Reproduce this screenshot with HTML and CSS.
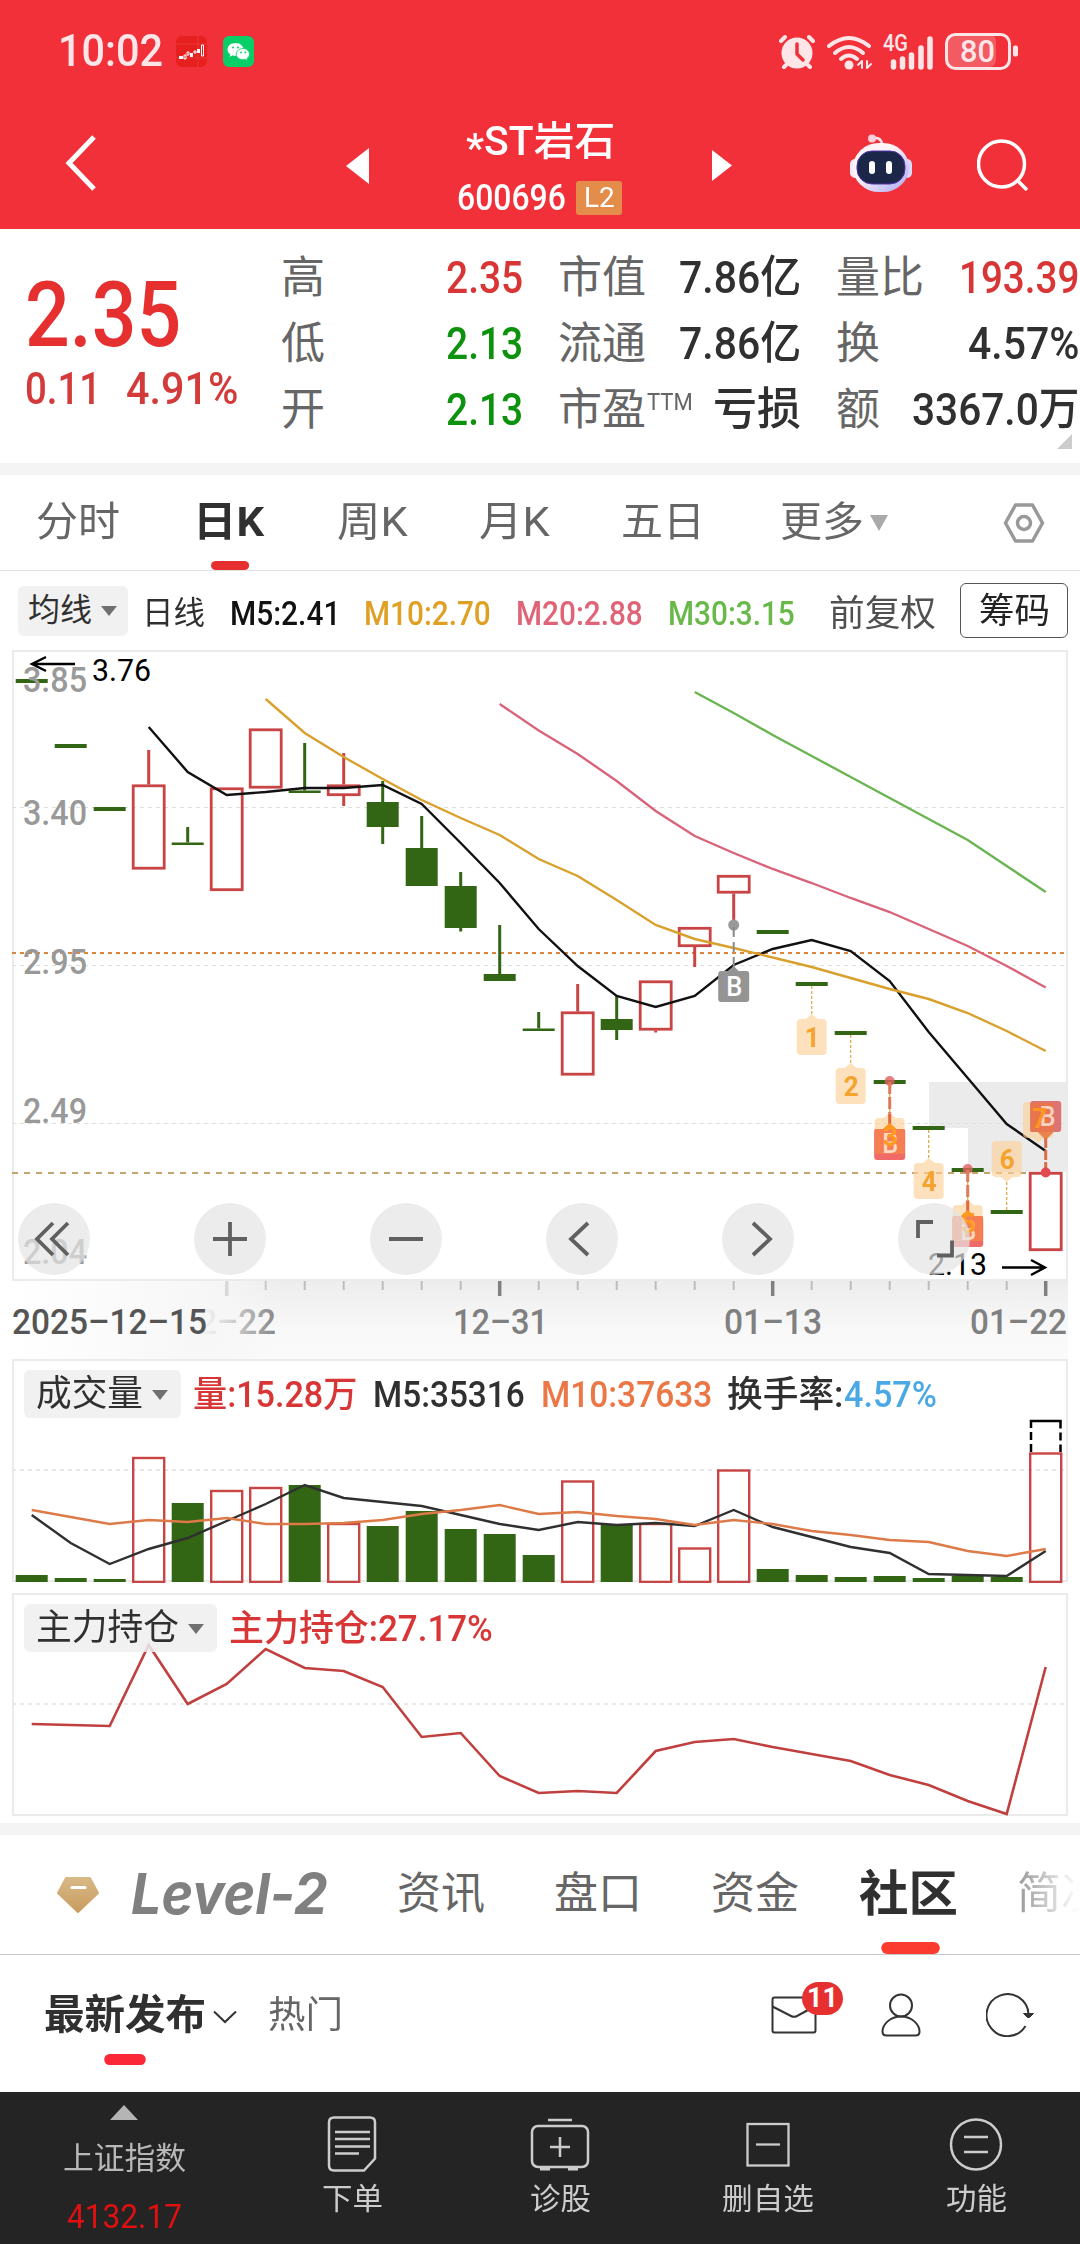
FILE: index.html
```
<!DOCTYPE html>
<html lang="zh-CN">

<head>
    <meta charset="UTF-8">
    <meta name="viewport" content="width=device-width, initial-scale=1.0">
    <title>*ST岩石 600696</title>
    <link rel="stylesheet" href="styles.css">
</head>

<body>
    <header class="header">
        <div class="status-bar">
            <span class="time" data-w="105">10:02</span>
            <svg class="app-icon" viewBox="0 0 31 31">
                <rect width="31" height="31" rx="6" fill="#e6201f" />
                <path d="M0 8h31M0 22h31M22 0v31" stroke="#f04a45" stroke-width="1" opacity=".5" />
                <path d="M3 20h4v3h-4zM14 17h3v4h-3zM21 13h3v4h-3z" fill="#fff" />
                <path d="M8 19h2v4h-2zM11 16h2v3h-2zM18 15h2v2h-2zM25.500 9h2v11h-2z" fill="none" stroke="#fff" />
            </svg>
            <svg class="app-icon wechat" viewBox="0 0 31 31">
                <rect width="31" height="31" rx="6" fill="#07ce66" />
                <path d="M12.500 7c-4.500 0-8 2.800-8 6.500 0 2 1 3.600 2.800 4.900l-.6 2.300 2.700-1.300c1 .3 2 .4 3.100.4 4.500 0 8-2.700 8-6.300S17 7 12.500 7z" fill="#fff" />
                <path d="M20 12.500c-3.800 0-6.700 2.400-6.700 5.600s2.900 5.600 6.700 5.600c.8 0 1.600-.1 2.300-.3l2.100 1.200-.5-2c1.600-1 2.600-2.700 2.600-4.500 0-3.200-2.900-5.600-6.500-5.600z" fill="#fff" stroke="#07ce66" stroke-width=".8" />
                <g fill="#07ce66"><circle cx="10" cy="11.500" r="1" /><circle cx="15" cy="11.500" r="1" /><circle cx="18" cy="16.500" r=".9" /><circle cx="22.300" cy="16.500" r=".9" /></g>
            </svg>
            <svg class="status-icons" viewBox="0 0 242 40">
                <g fill="#fee6e8" stroke="#fee6e8" stroke-linecap="round">
                    <circle cx="18" cy="22" r="15.500" stroke="none" />
                    <path d="M2 10l4-4M34 10l-4-4M7 34l-2 2M29 34l2 2" stroke-width="4" />
                    <path d="M18 13v10l6 6" fill="none" stroke="#f13039" stroke-width="3.500" stroke-linejoin="round" />
                    <path d="M50 15q20-16 40 0M56 22q14-12 28 0M62 28q8-7 16 0" fill="none" stroke-width="4" />
                    <circle cx="70" cy="34" r="4.500" stroke="none" />
                    <path d="M83 30v7M83 30l-4 4M88 30v7M88 37l4-4" fill="none" stroke-width="2" />
                    <path d="M114.500 31v5M123.500 28v8M132.500 24v12M142 17v19M151 8v28" stroke-width="5.500" />
                </g>
                <rect x="167" y="3" width="50" height="33" fill="#f25b62" rx="7" />
                <rect x="167.500" y="3.500" width="63" height="34" rx="9" fill="none" stroke="#fee6e8" stroke-width="3" />
                <rect x="234" y="14.500" width="5" height="11" rx="2" fill="#fee6e8" />
                <text x="104" y="20" font-size="23" textLength="25" lengthAdjust="spacingAndGlyphs" class="status-text">4G</text>
                <text x="181" y="31" font-size="32" textLength="35" lengthAdjust="spacingAndGlyphs" class="status-text">80</text>
            </svg>
        </div>
        <div class="title-bar">
            <svg class="back" viewBox="0 0 34 58"><path d="M30 3L5 29l25 26" fill="none" stroke="#fff" stroke-width="5" /></svg>
            <svg class="prev" viewBox="0 0 23 36"><path d="M0 18L23 0v36z" fill="#fff" /></svg>
            <div class="stock">
                <h1 class="stock-name" data-w="149"><span class="star">*</span>ST岩石</h1>
                <div class="stock-code">
                    <span data-w="109">600696</span>
                    <span class="l2"><span data-w="31">L2</span></span>
                </div>
            </div>
            <svg class="next" viewBox="0 0 20 31"><path d="M20 15.500L0 0v31z" fill="#fff" /></svg>
            <svg class="robot" viewBox="0 0 62 58">
                <defs>
                    <linearGradient id="shell" x1="0" y1="0" x2="1" y2="1">
                        <stop offset=".4" stop-color="#fff3f6" />
                        <stop offset=".85" stop-color="#bdb9f2" />
                        <stop offset="1" stop-color="#f5e8f6" />
                    </linearGradient>
                </defs>
                <path d="M23 4q8-1 9 6" fill="none" stroke="#f9dce8" stroke-width="2.500" />
                <circle cx="22" cy="4.500" r="4" fill="#f9cfdc" />
                <rect x="0" y="25" width="12" height="19" rx="5" fill="#f4eaf8" />
                <rect x="50" y="25" width="12" height="19" rx="5" fill="#dad7fa" />
                <rect x="3" y="9" width="56" height="49" rx="26" fill="url(#shell)" />
                <rect x="7" y="17" width="48" height="33" rx="15" fill="#1c2649" stroke="#5334b0" stroke-width="1" />
                <rect x="19" y="27" width="6" height="13" rx="3" fill="#fff" />
                <rect x="36" y="27" width="6" height="13" rx="3" fill="#fff" />
            </svg>
            <svg class="search" viewBox="0 0 52 52"><path d="M40 41l10 10" stroke="#fff" stroke-width="3.500" /><circle cx="24.500" cy="25" r="23" fill="none" stroke="#fff" stroke-width="3.500" /></svg>
        </div>
    </header>

    <section class="quote">
        <div class="price">
            <div class="price-now"><span data-w="156">2.35</span></div>
            <div class="price-change">
                <span data-w="76">0.11</span>
                <span data-w="112">4.91%</span>
            </div>
        </div>
        <div class="metrics">
            <span class="label">高</span><span class="value up" data-w="77">2.35</span>
            <span class="label">市值</span><span class="value" data-w="122">7.86亿</span>
            <span class="label">量比</span><span class="value up" data-w="120">193.39</span>
            <span class="label">低</span><span class="value down" data-w="77">2.13</span>
            <span class="label">流通</span><span class="value" data-w="122">7.86亿</span>
            <span class="label">换</span><span class="value" data-w="111">4.57%</span>
            <span class="label">开</span><span class="value down" data-w="77">2.13</span>
            <span class="label">市盈<sup data-w="46">TTM</sup></span><span class="value" data-w="88">亏损</span>
            <span class="label">额</span><span class="value" data-w="167">3367.0万</span>
        </div>
        <svg class="corner" viewBox="0 0 15 15"><path d="M15 0v15H0z" fill="#ccc" /></svg>
    </section>

    <nav class="period-tabs">
        <span data-w="84">分时</span>
        <span class="active" data-w="71">日K</span>
        <span data-w="71">周K</span>
        <span data-w="71">月K</span>
        <span data-w="84">五日</span>
        <span class="more" data-w="84">更多</span>
        <svg class="more-arrow" viewBox="0 0 18 16"><path d="M0 0h18L9 16z" fill="#aaa" /></svg>
        <svg class="settings" viewBox="0 0 42 42">
            <path d="M12.500 3h17l10 18-10 18h-17l-10-18z" fill="none" stroke="#999" stroke-width="3.500" stroke-linejoin="round" />
            <circle cx="21" cy="21" r="6.500" fill="none" stroke="#999" stroke-width="3.500" />
        </svg>
    </nav>

    <div class="ma-row">
        <span class="chip small"><span data-w="64">均线</span><i class="caret"></i></span>
        <span class="ma-day" data-w="63">日线</span>
        <span class="ma m5" data-w="110">M5:2.41</span>
        <span class="ma m10" data-w="127">M10:2.70</span>
        <span class="ma m20" data-w="127">M20:2.88</span>
        <span class="ma m30" data-w="127">M30:3.15</span>
        <span class="adjust" data-w="107">前复权</span>
        <span class="chips-btn"><span data-w="71">筹码</span></span>
    </div>

    <svg id="kline" class="kline" viewBox="0 650 1080 709"></svg>

    <section class="panel volume">
        <svg id="volume" viewBox="12 1359 1056 224"></svg>
        <div class="panel-head">
            <span class="chip"><span data-w="107">成交量</span><i class="caret"></i></span>
            <span class="up" data-w="164">量:15.28万</span>
            <span class="v5" data-w="152">M5:35316</span>
            <span class="v10" data-w="171">M10:37633</span>
            <span class="turnover" data-w="117">换手率:</span><span class="rate" data-w="93">4.57%</span>
        </div>
    </section>

    <section class="panel holding">
        <svg id="holding" viewBox="12 1593 1056 223"></svg>
        <div class="panel-head">
            <span class="chip"><span data-w="143">主力持仓</span><i class="caret"></i></span>
            <span class="up" data-w="264">主力持仓:27.17%</span>
        </div>
    </section>

    <nav class="info-tabs">
        <svg class="diamond" viewBox="0 0 42 36">
            <defs><linearGradient id="gold" x1="0" y1="0" x2="0" y2="1"><stop offset="0" stop-color="#d8b885" /><stop offset="1" stop-color="#c99c60" /></linearGradient></defs>
            <path d="M9 1h24l8 15-20 19L1 16z" fill="url(#gold)" stroke="url(#gold)" stroke-linejoin="round" stroke-width="2" />
            <path d="M15 10.500h13" stroke="#fff" stroke-width="3" stroke-linecap="round" />
        </svg>
        <span class="level2" data-w="197">Level-2</span>
        <span data-w="88">资讯</span>
        <span data-w="88">盘口</span>
        <span data-w="88">资金</span>
        <span class="active" data-w="99">社区</span>
        <span class="fading">简况</span>
    </nav>

    <div class="post-tabs">
        <span class="latest" data-w="162">最新发布</span>
        <svg class="chev" viewBox="0 0 24 14"><path d="M1 1.500l11 10.500 11-10.500" fill="none" stroke="#333" stroke-width="2" /></svg>
        <span class="hot" data-w="75">热门</span>
        <div class="mail">
            <svg viewBox="0 0 46 38"><rect x="1.500" y="1.500" width="43" height="35" rx="2" fill="none" stroke="#333" stroke-width="2" /><path d="M1.500 10.500L20 20q3 1.500 6 0L44.500 10" fill="none" stroke="#333" stroke-width="2" /></svg>
            <span class="badge">11</span>
        </div>
        <svg class="person" viewBox="0 0 40 44"><circle cx="20" cy="12.500" r="11" fill="none" stroke="#333" stroke-width="2" /><path d="M20 23.500c-11 0-18.500 8-18.500 15 0 3 1.500 4 4 4h29c2.500 0 4-1 4-4 0-7-7.500-15-18.500-15z" fill="none" stroke="#333" stroke-width="2" /></svg>
        <svg class="refresh" viewBox="0 0 48 44"><path d="M39.500 33A21 21 0 1 1 42.500 21" fill="none" stroke="#333" stroke-width="2" /><path d="M37.500 20.500h10l-4 4h-2z" fill="#333" stroke="#333" /></svg>
    </div>

    <footer class="bottom-nav">
        <div class="index">
            <svg class="up-arrow" viewBox="0 0 28 15"><path d="M14 0l14 15H0z" fill="#b5b5b5" /></svg>
            <span class="index-name" data-w="123">上证指数</span>
            <span class="index-value" data-w="115">4132.17</span>
        </div>
        <div class="nav-item">
            <svg viewBox="0 0 60 58"><path d="M12 2.500h36q5 0 5 5v36l-11 12H12q-5 0-5-5v-43q0-5 5-5z" fill="none" stroke="#ccc" stroke-width="2.500" /><path d="M13 17h35M13 24h35M13 31.500h35M13 38.500h24" stroke="#ccc" stroke-width="2.500" /></svg>
            <span data-w="61">下单</span>
        </div>
        <div class="nav-item">
            <svg viewBox="0 0 60 58"><rect x="2" y="11" width="56" height="41" rx="6" fill="none" stroke="#ccc" stroke-width="2.500" /><path d="M18 5h24M20 32h20M30 22v20" stroke="#ccc" stroke-width="2.500" /><path d="M10 54h10M38 54h10" stroke="#ccc" stroke-width="3" /></svg>
            <span data-w="61">诊股</span>
        </div>
        <div class="nav-item">
            <svg viewBox="0 0 60 58"><rect x="9.500" y="9" width="41" height="41.500" fill="none" stroke="#ccc" stroke-width="2.300" /><path d="M18 29.500h24" stroke="#ccc" stroke-width="2.300" /></svg>
            <span data-w="92">删自选</span>
        </div>
        <div class="nav-item">
            <svg viewBox="0 0 60 58"><circle cx="30" cy="29.500" r="25" fill="none" stroke="#ccc" stroke-width="2.500" /><path d="M18 22h24M18 37h24" stroke="#ccc" stroke-width="2.500" /></svg>
            <span data-w="61">功能</span>
        </div>
    </footer>

    <script src="script.js"></script>
</body>

</html>
```
FILE: styles.css
```
* {
    box-sizing: border-box;
}

body {
    margin: 0;
    width: 1080px;
    height: 2244px;
    overflow: hidden;
    background: #fff;
    color: #303030;
    font-family: Roboto, "Noto Sans CJK SC", sans-serif;
    line-height: 1.2;
    white-space: nowrap;
}

svg {
    display: block;
    flex: none;
}

[data-w] {
    display: inline-block;
    transform-origin: 0 50%;
    flex: none;
}

.up {
    color: #d83636;
}

.down {
    color: #0d920d;
}

/* header */
.header {
    height: 229px;
    background: #f13039;
    color: #fff;
}

.status-bar {
    height: 102px;
    display: flex;
    align-items: center;
    padding-left: 58px;
}

.time {
    font-size: 45px;
    font-weight: 500;
    color: #fee6e8;
}

.app-icon {
    width: 31px;
    height: 31px;
    margin-left: 13px;
}

.app-icon.wechat {
    margin-left: 16px;
}

.status-icons {
    width: 242px;
    height: 40px;
    margin-left: 525px;
}

.status-text {
    font-weight: 500;
    fill: #fee6e8;
}

.title-bar {
    height: 127px;
    display: flex;
    align-items: center;
}

.back {
    width: 34px;
    height: 58px;
    margin: -6px 0 0 64px;
}

.prev {
    width: 23px;
    height: 36px;
    margin-left: 248px;
}

.stock {
    width: 170px;
    margin-left: 88px;
    height: 127px;
    padding-top: 15px;
}

.stock-name {
    margin: 0 0 0 9px;
    font-size: 40px;
    font-weight: 500;
    line-height: 50px;
}

.star {
    position: relative;
    top: 7px;
}

.stock-code {
    display: flex;
    align-items: center;
    font-size: 36px;
    font-weight: 500;
    line-height: 40px;
    padding-top: 11px;
}

.l2 {
    width: 46px;
    height: 34px;
    margin-left: 10px;
    padding-left: 8px;
    border-radius: 3px;
    background: #e48d4b;
    font-size: 27px;
    font-weight: 400;
    line-height: 34px;
}

.next {
    width: 20px;
    height: 31px;
    margin-left: 85px;
}

.robot {
    width: 62px;
    height: 58px;
    margin: -5px 0 0 118px;
}

.search {
    width: 52px;
    height: 52px;
    margin: -2px 0 0 65px;
}

/* quote */
.quote {
    height: 246px;
    display: flex;
    position: relative;
    border-bottom: 12px solid #f4f4f4;
}

.price {
    width: 280px;
    padding: 41px 0 0 25px;
}

.price-now {
    font-size: 91px;
    font-weight: 500;
    line-height: 90px;
    color: #e63030;
}

.price-change {
    display: flex;
    gap: 25px;
    padding-top: 4px;
    font-size: 45px;
    font-weight: 500;
    line-height: 50px;
    color: #d33a3a;
}

.metrics {
    display: grid;
    grid-template-columns: 126px 117px 158px 120px 97px 181px;
    grid-template-rows: repeat(3, 66px);
    padding-top: 16px;
    line-height: 66px;
    font-size: 45px;
}

.metrics .label {
    padding-left: 1px;
    font-size: 44px;
    color: #666;
}

.metrics .label:nth-child(6n + 3),
.metrics .label:nth-child(6n + 5) {
    padding-left: 35px;
}

.metrics .value {
    justify-self: end;
    font-weight: 500;
}

.label sup {
    font-size: 24px;
    line-height: 20px;
    vertical-align: 15px;
    margin-left: 1px;
}

.corner {
    position: absolute;
    right: 8px;
    bottom: 14px;
    width: 15px;
    height: 15px;
}

/* period tabs */
.period-tabs {
    height: 96px;
    display: flex;
    align-items: center;
    padding-left: 36px;
    border-bottom: 1px solid #e2e2e2;
    color: #666;
    font-size: 41px;
    line-height: 99px;
}

.period-tabs span + span {
    margin-left: 71px;
}

.period-tabs span.active {
    margin-left: 73px;
    margin-right: 2px;
    color: #303030;
    font-weight: 700;
    position: relative;
}

.period-tabs span.more {
    margin-left: 75px;
}

.period-tabs .active::after {
    content: "";
    position: absolute;
    left: 17px;
    bottom: 2px;
    width: 36px;
    height: 9px;
    border-radius: 5px;
    background: #e63030;
}

.more-arrow {
    width: 18px;
    height: 16px;
    margin-left: 6px;
}

.settings {
    width: 42px;
    height: 42px;
    margin-left: 115px;
}

/* moving averages */
.ma-row {
    height: 79px;
    display: flex;
    align-items: center;
    padding-left: 18px;
    font-size: 32px;
}

.chip {
    height: 48px;
    display: flex;
    align-items: center;
    padding: 2px 13px 0 12px;
    border-radius: 6px;
    background: rgba(239, 239, 239, .85);
    color: #303030;
}

.chip.small {
    width: 110px;
    height: 50px;
    padding: 0 0 0 10px;
}

.caret {
    margin-left: 9px;
    border: 8px solid transparent;
    border-top: 10px solid #707070;
    border-bottom: 0;
}

.ma-day {
    margin: 5px 0 0 14px;
}

.ma {
    font-size: 34px;
    font-weight: 500;
    margin: 6px 0 0 25px;
}

.ma.m10 {
    margin-left: 24px;
}

.m5 {
    color: #111;
}

.m10 {
    color: #dfa024;
}

.m20 {
    color: #e06478;
}

.m30 {
    color: #69b94a;
}

.adjust {
    margin: 9px 0 0 34px;
    font-size: 36px;
    color: #505050;
}

.chips-btn {
    width: 108px;
    height: 55px;
    margin-left: 24px;
    padding-left: 18px;
    border: 1px solid #555;
    border-radius: 6px;
    font-size: 35px;
    line-height: 56px;
    color: #222;
}

.kline {
    width: 1080px;
    height: 709px;
    overflow: hidden;
}

/* sub charts */
.panel {
    position: relative;
    margin-left: 12px;
    width: 1056px;
}

.volume {
    height: 234px;
}

.holding {
    height: 230px;
}

.panel > svg {
    width: 1056px;
}

.panel-head {
    position: absolute;
    left: 12px;
    top: 11px;
    display: flex;
    align-items: center;
    font-size: 36px;
    font-weight: 500;
}

.panel-head > [data-w] {
    padding-top: 3px;
}

.panel-head > .up {
    margin-left: 12px;
}

.panel-head .chip {
    font-weight: 400;
}

.v5 {
    margin-left: 16px;
    color: #303030;
}

.v10 {
    margin-left: 16px;
    color: #ea7745;
}

.turnover {
    margin-left: 15px;
}

.rate {
    color: #4aa8e4;
}

/* info tabs */
.info-tabs {
    height: 132px;
    display: flex;
    align-items: center;
    border-top: 12px solid #f4f4f4;
    border-bottom: 1px solid #c8c8c8;
    padding-left: 57px;
    font-size: 44px;
    line-height: 123px;
    color: #666;
}

.diamond {
    width: 42px;
    height: 36px;
}

.info-tabs .level2 {
    margin-left: 32px;
    font-family: Inter, Roboto, sans-serif;
    font-size: 56px;
    font-weight: 700;
    font-style: italic;
    color: #808080;
}

.info-tabs span {
    margin-left: 69px;
}

.info-tabs .active {
    margin-left: 60px;
    font-size: 49px;
    font-weight: 700;
    color: #303030;
    position: relative;
}

.info-tabs .active::after {
    content: "";
    position: absolute;
    left: 22px;
    bottom: 2px;
    width: 58px;
    height: 12px;
    border-radius: 6px;
    background: #fb3a30;
}

.info-tabs .fading {
    margin-left: 59px;
    width: 62px;
    overflow: hidden;
    background: linear-gradient(90deg, #999, #fff);
    background-clip: text;
    -webkit-background-clip: text;
    color: transparent;
}

/* post tabs */
.post-tabs {
    height: 137px;
    display: flex;
    align-items: center;
    padding: 0 0 17px 44px;
}

.latest {
    margin-top: 2px;
    font-size: 41px;
    font-weight: 700;
    position: relative;
}

.latest::after {
    content: "";
    position: absolute;
    left: 61px;
    bottom: -24px;
    width: 42px;
    height: 11px;
    border-radius: 6px;
    background: #fb2838;
}

.chev {
    width: 24px;
    height: 14px;
    margin: 4px 0 0 7px;
}

.hot {
    margin: 3px 0 0 31px;
    font-size: 37px;
    color: #666;
}

.mail {
    position: relative;
    margin-left: 428px;
}

.mail svg {
    width: 46px;
    height: 38px;
}

.badge {
    position: absolute;
    left: 31px;
    top: -14px;
    width: 41px;
    height: 33px;
    border-radius: 17px;
    background: #e63030;
    color: #fff;
    font-size: 27px;
    font-weight: 700;
    line-height: 32px;
    text-align: center;
}

.person {
    width: 40px;
    height: 44px;
    margin-left: 64px;
}

.refresh {
    width: 48px;
    height: 44px;
    margin-left: 65px;
}

/* bottom nav */
.bottom-nav {
    height: 152px;
    display: flex;
    background: #242424;
    color: #ccc;
    font-size: 30px;
}

.index {
    width: 248px;
    display: flex;
    flex-direction: column;
    align-items: center;
    padding-top: 13px;
}

.up-arrow {
    width: 28px;
    height: 15px;
}

.index-name {
    margin-top: 17px;
    font-size: 31px;
    line-height: 44px;
    color: #b8b8b8;
}

.index-value {
    margin-top: 14px;
    font-size: 33px;
    line-height: 44px;
    color: #e01010;
}

.nav-item {
    width: 208px;
    display: flex;
    flex-direction: column;
    align-items: center;
    padding-top: 23px;
}

.nav-item svg {
    width: 60px;
    height: 58px;
}

.nav-item span {
    margin-top: 4px;
    line-height: 44px;
}
```
FILE: script.js
```
document.querySelectorAll('[data-w]').forEach(function (el) {
    const target = Number(el.dataset.w);
    const natural = el.offsetWidth;
    el.style.width = target + 'px';
    el.style.transform = 'scaleX(' + target / natural + ')';
});

const FIRST = 31.7;
const STEP = 39;
const RED = '#c94444';
const GREEN = '#326514';

function cx(i) {
    return FIRST + STEP * i;
}

function rect(x, y, w, h, attrs) {
    return `<rect x="${x}" y="${y}" width="${w}" height="${h}" ${attrs}/>`;
}

function line(x1, y1, x2, y2, color, width, dash) {
    return `<line x1="${x1}" y1="${y1}" x2="${x2}" y2="${y2}" stroke="${color}" stroke-width="${width}" stroke-dasharray="${dash || 'none'}"/>`;
}

function text(x, y, w, size, color, str, weight) {
    return `<text x="${x}" y="${y}" textLength="${w}" lengthAdjust="spacingAndGlyphs" font-size="${size}" fill="${color}" font-weight="${weight || 500}">${str}</text>`;
}

function curve(start, ys, color, width) {
    const points = ys.map((y, n) => cx(start + n) + ',' + y).join(' ');
    return `<polyline points="${points}" fill="none" stroke="${color}" stroke-width="${width || 2.4}"/>`;
}

// [type, body top, body bottom, high, low]
const candles = [
    ['g', 679, 683], ['g', 744, 748], ['g', 807, 811], ['r', 784.5, 869.5, 750], ['g', 842.5, 845, 827],
    ['r', 787.5, 891], ['r', 728.5, 788.5], ['g', 790.5, 793, 743], ['r', 784.5, 796, 753, 806],
    ['g', 802, 827, 781, 844], ['g', 848, 886, 816], ['g', 886, 928, 872, 931.5], ['g', 974, 981, 925],
    ['g', 1028.5, 1031, 1012], ['r', 1011.5, 1075.5, 984], ['g', 1019, 1030, 996, 1040], ['r', 980.5, 1030.5, 0, 1032.5],
    ['r', 927, 947, 0, 967], ['r', 875, 893.5, 0, 924], ['g', 930, 934], ['g', 982, 986], ['g', 1031, 1035],
    ['g', 1080, 1084], ['g', 1126, 1130], ['g', 1168, 1172], ['g', 1210, 1214], ['r', 1172, 1251]
];

function drawCandle(c, i) {
    const color = c[0] === 'r' ? RED : GREEN;
    let out = '';
    if (c[3]) out += line(cx(i), c[3], cx(i), c[1], color, 3);
    if (c[4]) out += line(cx(i), c[2], cx(i), c[4], color, 3);
    if (c[0] === 'r') {
        out += rect(cx(i) - 15.5, c[1] + 1.3, 31, c[2] - c[1] - 2.6, `fill="none" stroke="${RED}" stroke-width="2.8"`);
    } else {
        out += rect(cx(i) - 16, c[1], 32, c[2] - c[1], `fill="${GREEN}"`);
    }
    return out;
}

// day counter box, up = tip points to a candle above it
function numberBox(x, top, up) {
    const tip = up ? `M${x - 6} ${top}l6 -5l6 5z` : `M${x - 6} ${top + 36}l6 5l6 -5z`;
    return `<g opacity=".62">${rect(x - 15, top, 30, 36, 'rx="4" fill="#fdd096"')}<path d="${tip}" fill="#fdd096"/></g>`;
}

function numberText(x, top, n, color) {
    return text(x - 7, top + 28, 15, 27, color || '#f3a32e', n, 700);
}

function buyBox(x, top, color) {
    return rect(x - 15.5, top, 31, 31, `rx="3" fill="${color}"`);
}

function buyText(x, top, color) {
    return text(x - 7.5, top + 25, 16, 27, color, 'B', 500);
}

function drawKline() {
    let s = '<defs><linearGradient id="axis" x1="0" y1="0" x2="0" y2="1"><stop offset="0" stop-color="#ededed"/><stop offset=".6" stop-color="#f9f9f9"/><stop offset="1" stop-color="#fbfbfb"/></linearGradient>' +
        '<linearGradient id="fade"><stop offset="0" stop-color="#fff"/><stop offset=".7" stop-color="#f7f7f7"/><stop offset=".8" stop-color="#f7f7f7" stop-opacity=".75"/><stop offset="1" stop-color="#f7f7f7" stop-opacity="0"/></linearGradient></defs>';

    s += rect(13, 651, 1054, 629, 'fill="#fff" stroke="#ebebeb" stroke-width="2"');
    s += rect(929, 1082, 139, 46, 'fill="#ebebeb"') + rect(968, 1128, 100, 44, 'fill="#ebebeb"');
    [807.5, 965.5, 1123.5].forEach(y => s += line(12, y, 1067, y, '#dedede', 1, '4 4'));
    s += line(12, 953, 1067, 953, '#dd8640', 2, '4 4');
    s += line(12, 1173, 1067, 1173, '#c4a470', 2, '6 6');

    candles.forEach((c, i) => s += drawCandle(c, i));

    s += curve(3, [727, 772, 795, 792, 788, 788, 785, 804, 843, 883, 929, 966, 996, 1007, 996, 965, 949, 940, 951, 981, 1032, 1078, 1124, 1151], '#111');
    s += curve(6, [699, 733, 757, 779, 800, 818, 835, 859, 876, 900, 925, 939, 948, 957.5, 967, 978, 989, 999, 1013, 1031, 1051], '#d9a02e');
    s += curve(12, [704, 730.5, 754, 781, 811, 836, 853, 869, 883, 898, 912, 929, 946, 966, 987.5], '#d9647a');
    s += curve(17, [692, 713, 735, 756, 777, 798, 819, 840, 866, 892], '#6ab551');

    [['3.85', 692], ['3.40', 825], ['2.95', 974], ['2.49', 1123], ['2.04', 1264]].forEach(l => s += text(23, l[1], 64, 35, '#999', l[0]));
    s += '<path d="M75 664H32M46 657L32 664l14 7" fill="none" stroke="#000" stroke-width="2.4"/>' + text(92, 681, 59, 31.5, '#000', '3.76', 400);

    // signals
    s += `<circle cx="${cx(18)}" cy="925" r="5.5" fill="#999"/>` + line(cx(18), 927, cx(18), 967, '#888', 2, '10 5');
    s += `<path d="M${cx(18) - 6} 972l6 -6l6 6z" fill="#949494"/>` + buyBox(cx(18), 971, '#949494') + buyText(cx(18), 971, '#fff');
    [[20, 984, 1019], [21, 1033, 1068], [22, 1082, 1118], [23, 1128, 1163], [24, 1170, 1205]].forEach(function (m, k) {
        const x = cx(m[0]);
        s += line(x, m[1] + 2, x, m[2] - 4, '#dcae4e', 1.3, '3 2');
        if (k === 2 || k === 4) {
            // buy mark sits half under the counter box
            s += `<circle cx="${x}" cy="${m[1] - 1}" r="5" fill="#e06060" opacity=".8"/>`;
            s += line(x, m[1], x, m[2] - 2, '#e07a58', 3, '12 3');
            s += numberBox(x, m[2], true);
            s += line(x, m[2] - 4, x, m[2] + 8, '#e06a40', 3);
            s += buyBox(x, m[2] + 11, '#ef6a68');
            s += rect(x - 15, m[2] + 11, 30, 25, 'fill="#f57f50"');
            s += `<path d="M${x - 7} ${m[2] + 11}l7 -6l7 6z" fill="#ff9420"/>`;
            s += buyText(x, m[2] + 10, '#fbd8c4') + numberText(x, m[2], k + 1, '#ff9a20');
        } else {
            s += numberBox(x, m[2], true) + numberText(x, m[2], k + 1);
        }
    });
    s += line(cx(25), 1182, cx(25), 1212, '#dcae4e', 1.3, '3 2') + numberBox(cx(25), 1141, false) + numberText(cx(25), 1141, 6);
    s += numberBox(1038, 1102, false) + buyBox(cx(26), 1101, '#dd7474') + rect(1030.500, 1103, 23, 29, 'fill="#e8754c"');
    s += `<path d="M${cx(26) - 8} 1132h16l-8 8z" fill="#e8844c"/>` + line(cx(26), 1138, cx(26), 1172, '#dd6a48', 3, '10 2');
    s += buyText(1047, 1101, '#f6d2c2') + text(1032, 1128, 15, 27, '#ff9420', '7', 700);
    s += `<circle cx="${cx(26)}" cy="1172.500" r="5" fill="#e04a50"/>`;
    s += text(928, 1275, 59, 31.5, '#000', '2.13', 400) + '<path d="M1002 1267.500h43M1031 1260l14 7.500l-14 7.500" fill="none" stroke="#000" stroke-width="2.4"/>';

    // zoom and scroll buttons
    const icons = [
        'M53 1223L37 1239l16 16M68 1223L52 1239l16 16', 'M213 1239h34M230 1222v34', 'M389 1239h34',
        'M588 1223L571 1239l17 16', 'M753 1223l17 16l-17 16', 'M918 1238v-16h15M937 1255.500h15v-15'
    ];
    icons.forEach(function (d, k) {
        s += `<circle cx="${54 + 176 * k}" cy="1239" r="36" fill="#e4e4e4" opacity=".7"/>`;
        s += `<path d="${d}" fill="none" stroke="#606060" stroke-width="3.8"/>`;
    });

    // date axis
    s += rect(12, 1281, 1056, 85, 'fill="url(#axis)"');
    for (let i = 5; i < 27; i++) {
        const big = (i - 5) % 7 === 0;
        s += line(cx(i), 1281, cx(i), big ? 1296 : 1290, big ? '#808080' : '#bdbdbd', big ? 3.5 : 2);
    }
    // the axis uses wide dashes between narrow digits
    [['12–22', 179, 97], ['12–31', 453, 95], ['01–13', 724, 98], ['01–22', 970, 97]].forEach(d => s += text(d[1], 1334, d[2], 35, '#808080', d[0]));
    s += rect(12, 1281, 268, 85, 'fill="url(#fade)"');
    s += text(12, 1334, 195, 35, '#555', '2025–12–15');
    document.getElementById('kline').innerHTML = s;
}

const volumes = [
    ['g', 1575], ['g', 1578], ['g', 1579], ['r', 1457], ['g', 1503], ['r', 1490], ['r', 1487], ['g', 1485], ['r', 1523],
    ['g', 1526], ['g', 1511], ['g', 1529], ['g', 1534], ['g', 1555], ['r', 1480.5], ['g', 1525], ['r', 1523], ['r', 1547.5],
    ['r', 1469.5], ['g', 1569], ['g', 1575], ['g', 1577], ['g', 1576], ['g', 1578], ['g', 1576], ['g', 1577], ['r', 1452.5]
];

function drawVolume() {
    let s = rect(13, 1360, 1054, 221, 'fill="#fff" stroke="#ebebeb" stroke-width="2"');
    s += line(12, 1470, 1067, 1470, '#e8e8e8', 2, '4 4');
    volumes.forEach(function (v, i) {
        if (v[0] === 'r') {
            s += rect(cx(i) - 15.5, v[1] + 1, 31, 1581 - v[1], `fill="none" stroke="${RED}" stroke-width="2.4"`);
        } else {
            s += rect(cx(i) - 16, v[1], 32, 1582 - v[1], `fill="${GREEN}"`);
        }
    });
    s += '<path d="M1031 1452v-31h29.500v31" fill="none" stroke="#000" stroke-width="2.500" stroke-dasharray="8 4 8 4 44 4 8 4 8"/>';
    s += curve(0, [1515, 1543, 1564, 1549, 1538, 1521, 1504, 1485, 1498, 1502, 1506, 1515, 1524, 1530, 1522, 1525, 1523, 1526, 1510, 1527, 1537, 1547, 1553, 1574, 1575, 1576, 1551], '#303030');
    s += curve(0, [1510, 1517, 1524, 1520, 1522, 1518, 1524, 1524, 1523, 1520, 1514, 1510, 1505, 1514, 1512, 1516, 1519, 1525, 1520, 1524, 1531, 1535, 1540, 1542, 1551, 1556, 1549], '#dd7a48');
    document.getElementById('volume').innerHTML = s;
}

function drawHolding() {
    let s = rect(13, 1594, 1054, 221, 'fill="#fff" stroke="#ebebeb" stroke-width="2"');
    s += line(12, 1704, 1067, 1704, '#e8e8e8', 2, '4 4');
    s += curve(0, [1724, 1725, 1726, 1645, 1704, 1684, 1649, 1668, 1671, 1687, 1737, 1733, 1776, 1793, 1791, 1793, 1751, 1742, 1739, 1747, 1754, 1761, 1775, 1785, 1801, 1814, 1667], '#c04040', 2.6);
    document.getElementById('holding').innerHTML = s;
}

drawKline();
drawVolume();
drawHolding();
```
